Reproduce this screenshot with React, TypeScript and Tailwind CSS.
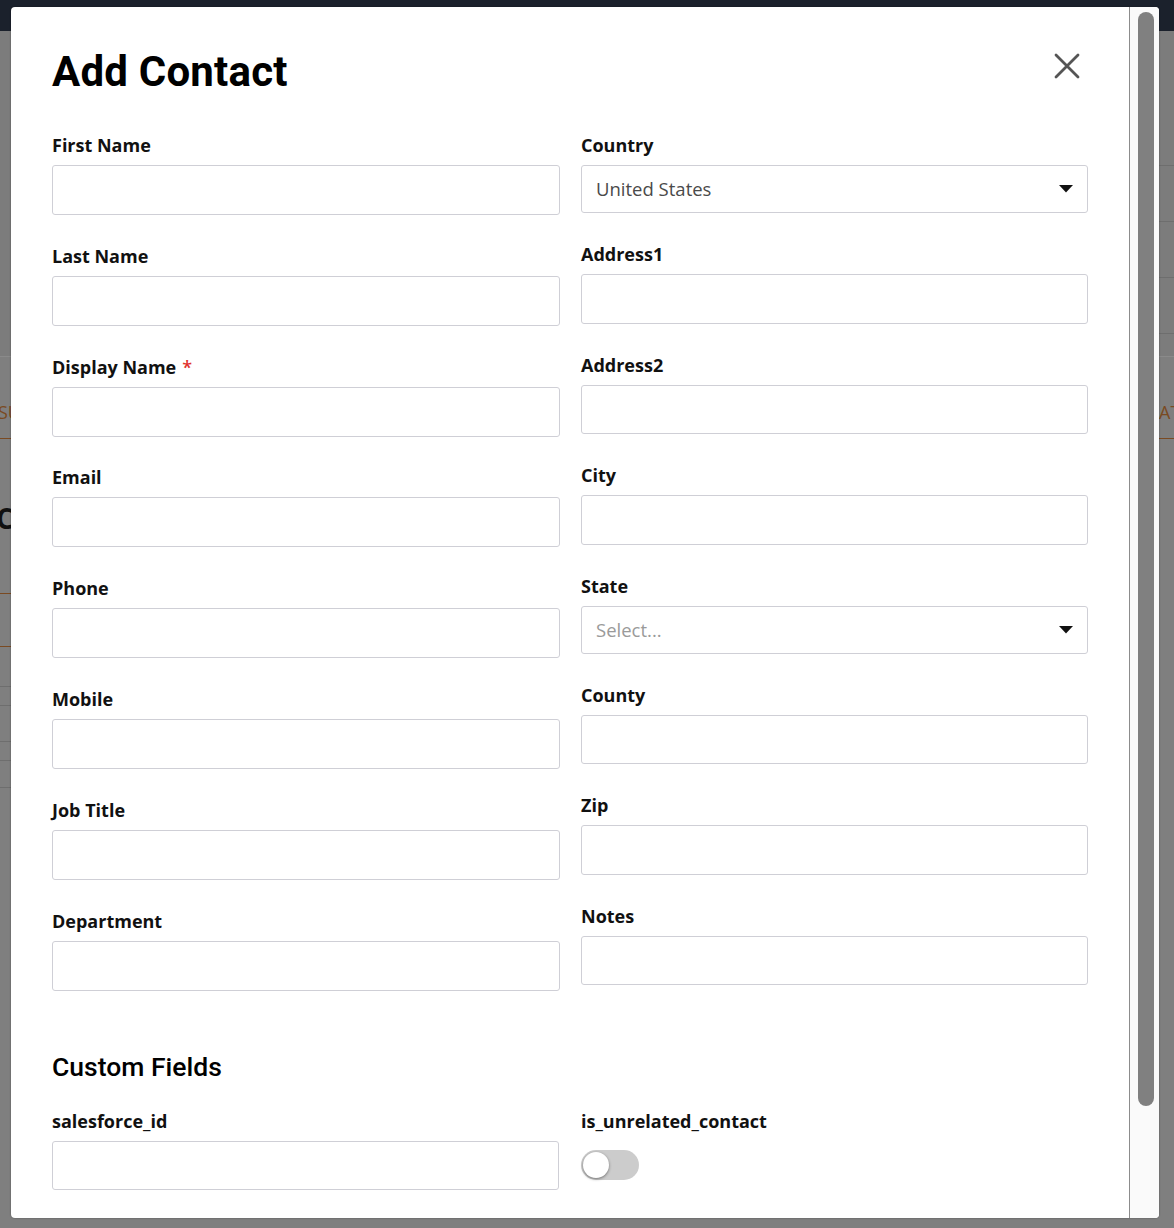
import React from "react";

const labelCls =
  "block text-[18px] leading-[24px] font-bold text-[#111] font-['Open_Sans',sans-serif]";

function Field({
  label,
  required,
  h,
}: {
  label: string;
  required?: boolean;
  h: string;
}) {
  return (
    <div className="flex flex-col">
      <label className={labelCls}>
        {label}
        {required && <span className="text-[#e0322d] ml-[6px] font-semibold">*</span>}
      </label>
      <div
        className={`mt-2 ${h} w-full border border-[#cfcfd6] rounded-[3px] bg-white`}
      />
    </div>
  );
}

function SelectField({
  label,
  value,
  placeholder,
}: {
  label: string;
  value: string;
  placeholder?: boolean;
}) {
  return (
    <div className="flex flex-col">
      <label className={labelCls}>{label}</label>
      <div className="mt-2 h-[48px] w-full border border-[#cfcfd6] rounded-[3px] bg-white flex items-center justify-between pl-[14px] pr-[14px]">
        <span
          className={`text-[18.5px] font-['Open_Sans',sans-serif] ${
            placeholder ? "text-[#9a9a9a]" : "text-[#4a4a4a]"
          }`}
        >
          {value}
        </span>
        <svg width="14" height="8" viewBox="0 0 14 8">
          <path d="M0 0 L14 0 L7 7.5 Z" fill="#111" />
        </svg>
      </div>
    </div>
  );
}

export default function App() {
  return (
    <div className="relative w-[1174px] h-[1228px] overflow-hidden bg-[#7f7f7f]">
      {/* dimmed background page */}
      <div className="h-[31px] bg-[#1b212c]" />
      <div className="absolute left-0 top-[31px] w-full h-[325px] bg-[#7c7c7c]" />
      <div className="absolute left-0 top-[356px] w-full h-px bg-[#8a8a8a]" />
      <div className="absolute right-0 top-[165px] w-[15px] h-px bg-[#6e6e6e]" />
      <div className="absolute right-0 top-[221px] w-[15px] h-px bg-[#6e6e6e]" />
      <div className="absolute right-0 top-[277px] w-[15px] h-px bg-[#6e6e6e]" />
      <div className="absolute right-0 top-[333px] w-[15px] h-px bg-[#6e6e6e]" />
      <div className="absolute left-0 top-[400px] text-[18px] text-[#7a4a22] font-['Open_Sans',sans-serif] leading-[24px] -ml-[2px]">
        SU
      </div>
      <div className="absolute right-0 top-[400px] w-[15px] overflow-hidden text-[18px] text-[#7a4a22] font-['Open_Sans',sans-serif] leading-[24px]">
        AT
      </div>
      <div className="absolute left-0 top-[438px] w-full h-px bg-[#7a4a22]" />
      <div className="absolute left-0 top-[500px] text-[28px] font-bold text-[#111] font-['Open_Sans',sans-serif] leading-[36px] -ml-[4px]">
        C
      </div>
      <div className="absolute left-0 top-[593px] w-[12px] h-px bg-[#7a4a22]" />
      <div className="absolute left-0 top-[646px] w-[12px] h-px bg-[#7a4a22]" />
      <div className="absolute left-0 top-[686px] w-[12px] h-px bg-[#6e6e6e]" />
      <div className="absolute left-0 top-[705px] w-[12px] h-px bg-[#6e6e6e]" />
      <div className="absolute left-0 top-[741px] w-[12px] h-px bg-[#6e6e6e]" />
      <div className="absolute left-0 top-[760px] w-[12px] h-px bg-[#6e6e6e]" />
      <div className="absolute left-0 top-[787px] w-[12px] h-px bg-[#6e6e6e]" />

      {/* modal */}
      <div className="absolute left-[11px] top-[7px] w-[1148px] h-[1211px] bg-white rounded-[4px] overflow-hidden flex shadow-[0_0_2px_rgba(0,0,0,0.4)]">
        <div className="flex-1 overflow-hidden pl-[41px] pr-[40px] relative">
          <div className="flex items-start justify-between pt-[40px]">
            <h1 className="text-[42px] leading-[50px] font-bold text-black font-['Roboto',sans-serif] tracking-[0.2px]">
              Add Contact
            </h1>
            <button className="mt-[6px] mr-[9px]">
              <svg width="26" height="26" viewBox="0 0 26 26">
                <path
                  d="M2 2 L24 24 M24 2 L2 24"
                  stroke="#555"
                  strokeWidth="2.8"
                  strokeLinecap="round"
                />
              </svg>
            </button>
          </div>

          <div className="grid grid-cols-[508px_507px] gap-x-[21px] mt-[36px]">
            <div className="flex flex-col gap-[28.8px]">
              <Field label="First Name" h="h-[50px]" />
              <Field label="Last Name" h="h-[50px]" />
              <Field label="Display Name" required h="h-[50px]" />
              <Field label="Email" h="h-[50px]" />
              <Field label="Phone" h="h-[50px]" />
              <Field label="Mobile" h="h-[50px]" />
              <Field label="Job Title" h="h-[50px]" />
              <Field label="Department" h="h-[50px]" />
            </div>
            <div className="flex flex-col gap-[29px]">
              <SelectField label="Country" value="United States" />
              <Field label="Address1" h="h-[49.5px]" />
              <Field label="Address2" h="h-[49.5px]" />
              <Field label="City" h="h-[49.5px]" />
              <SelectField label="State" value="Select..." placeholder />
              <Field label="County" h="h-[49.5px]" />
              <Field label="Zip" h="h-[49.5px]" />
              <Field label="Notes" h="h-[49.5px]" />
            </div>
          </div>

          <h2 className="mt-[59px] text-[26.5px] leading-[34px] font-medium text-black font-['Roboto',sans-serif]">
            Custom Fields
          </h2>

          <div className="grid grid-cols-[507px_507px] gap-x-[22px] mt-[25px]">
            <Field label="salesforce_id" h="h-[49px]" />
            <div className="flex flex-col">
              <label className={labelCls}>is_unrelated_contact</label>
              <div className="mt-[17px] w-[58px] h-[30px] rounded-full bg-[#cccccc] relative">
                <div className="absolute left-[2px] top-[2px] w-[26px] h-[26px] rounded-full bg-white shadow-[0_1px_3px_rgba(0,0,0,0.45)]" />
              </div>
            </div>
          </div>
        </div>

        {/* scrollbar */}
        <div className="w-[30px] h-full bg-[#fafafa] border-l border-[#8c8c8c] pl-[8px] pt-[5px]">
          <div className="w-[16px] h-[1094px] rounded-full bg-[#808080]" />
        </div>
      </div>
    </div>
  );
}
